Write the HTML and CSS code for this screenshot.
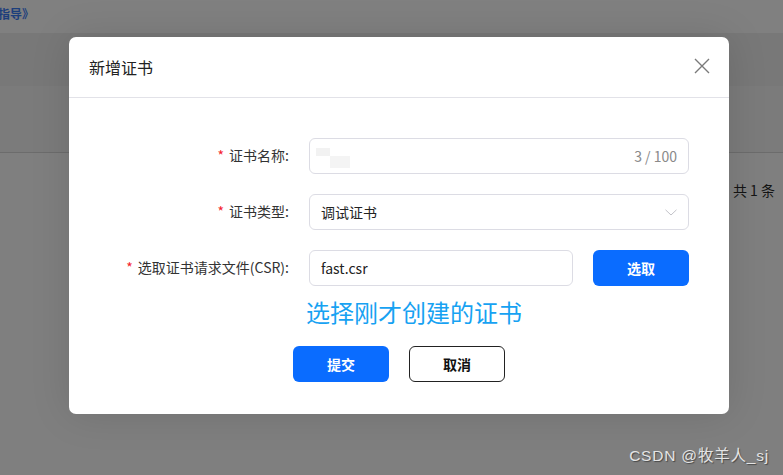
FILE: index.html
```html
<!DOCTYPE html>
<html lang="zh">
<head>
<meta charset="utf-8">
<title>新增证书</title>
<link rel="stylesheet" href="styles.css">
</head>
<body>
<div class="page">
  <div class="page-top"><span class="guide">指导》</span></div>
  <div class="band band-a"></div>
  <div class="band band-b"></div>
  <div class="page-row"><span class="total">共 1 条</span></div>
</div>

<div class="modal">
  <div class="modal-header">
    <span class="modal-title">新增证书</span>
    <svg class="close" width="16" height="16" viewBox="0 0 16 16"><path d="M1 1 L15 15 M15 1 L1 15" stroke="#7a7a7a" stroke-width="1.4" fill="none"/></svg>
  </div>
  <div class="modal-body">
    <div class="form-row">
      <label class="label"><span class="req">*</span>证书名称:</label>
      <div class="field input">
        <span class="redact"><i class="r1"></i><i class="r2"></i></span>
        <span class="count">3 / 100</span>
      </div>
    </div>
    <div class="form-row">
      <label class="label"><span class="req">*</span>证书类型:</label>
      <div class="field input">
        <span class="value">调试证书</span>
        <svg class="arrow" width="12" height="7" viewBox="0 0 12 7"><path d="M0.5 0.8 L6 6 L11.5 0.8" stroke="#c2c2c8" stroke-width="1" fill="none"/></svg>
      </div>
    </div>
    <div class="form-row">
      <label class="label"><span class="req">*</span>选取证书请求文件(CSR):</label>
      <div class="field split">
        <div class="input file"><span class="value">fast.csr</span></div>
        <button class="btn primary">选取</button>
      </div>
    </div>
    <div class="form-row note-row">
      <span class="label"></span>
      <div class="note">选择刚才创建的证书</div>
    </div>
    <div class="actions">
      <button class="btn primary">提交</button>
      <button class="btn outline">取消</button>
    </div>
  </div>
</div>

<div class="watermark">CSDN @牧羊人_sj</div>
</body>
</html>
```

FILE: styles.css
```css
* { box-sizing: border-box; }
html, body { margin: 0; padding: 0; }
body {
  width: 783px;
  height: 475px;
  overflow: hidden;
  background: #7f7f7f;
  font-family: "Noto Sans CJK SC", "Noto Sans", sans-serif;
  position: relative;
}
.page { display: flex; flex-direction: column; }
.page-top { height: 33px; background: #808080; overflow: hidden; }
.guide {
  display: inline-block;
  margin-left: -2px;
  color: #1c3e7c;
  font-size: 12px;
  font-weight: 700;
  line-height: 13px;
}
.band-a { height: 53px; background: #787878; }
.band-b { height: 67px; background: #7b7b7b; border-bottom: 1px solid #6c6c6c; }
.page-row {
  display: flex;
  justify-content: flex-end;
  padding: 27px 8px 0 0;
}
.total { color: #141414; font-size: 14px; line-height: 20px; }

.modal {
  position: absolute;
  left: 69px;
  top: 37px;
  width: 660px;
  height: 377px;
  background: #fff;
  border-radius: 7px;
  box-shadow: 0 0 40px rgba(0,0,0,0.12);
}
.modal-header {
  height: 61px;
  border-bottom: 1px solid #e2e2e8;
  display: flex;
  align-items: center;
  justify-content: space-between;
  padding: 0 19px 0 20px;
}
.modal-title { font-size: 16px; color: #222; }
.close { display: block; margin-top: -2px; }

.modal-body { padding: 40px 40px 32px 0; display: flex; flex-direction: column; gap: 20px; }
.form-row { display: flex; align-items: center; gap: 20px; }
.label {
  width: 220px;
  text-align: right;
  font-size: 14px;
  color: #333;
  white-space: nowrap;
  flex: none;
  margin-top: -2px;
}
.req { color: #f5222d; margin-right: 5px; }
.field { width: 380px; }
.input {
  height: 36px;
  border: 1px solid #dcdce4;
  border-radius: 6px;
  display: flex;
  align-items: center;
  justify-content: space-between;
  padding: 0 11px;
  font-size: 14px;
  color: #222;
  background: #fff;
}
.value { color: #222; }
.count { color: #8a8a8a; font-size: 14px; }
.redact { position: relative; width: 40px; height: 36px; margin-left: -5px; }
.redact i { position: absolute; display: block; }
.redact .r1 { left: 0; top: 10px; width: 14px; height: 8px; background: #f2f2f2; }
.redact .r2 { left: 14px; top: 18px; width: 20px; height: 12px; background: #f4f4f4; }
.arrow { display: block; }
.split { display: flex; gap: 20px; }
.file { width: 264px; }
.btn {
  width: 96px;
  height: 36px;
  border-radius: 6px;
  font-family: "Noto Sans CJK SC", sans-serif;
  font-size: 14px;
  font-weight: 700;
  cursor: pointer;
  padding: 0;
}
.primary { background: #0a6cff; border: none; color: #fff; }
.outline { background: #fff; border: 1px solid #222; color: #111; }
.note-row { margin-top: -10px; }
.note {
  font-size: 24px;
  line-height: 32px;
  color: #17a2f2;
  margin-left: -3px;
}
.actions { display: flex; justify-content: center; gap: 20px; padding-left: 40px; margin-top: -2px; }

.watermark {
  position: absolute;
  right: 14px;
  bottom: 10px;
  font-family: "Liberation Sans", "Noto Sans CJK SC", sans-serif;
  font-size: 15.5px;
  letter-spacing: 0.8px;
  line-height: 18px;
  color: #e4e4e4;
  text-shadow: 1px 1px 1px rgba(0,0,0,0.45);
}
```
